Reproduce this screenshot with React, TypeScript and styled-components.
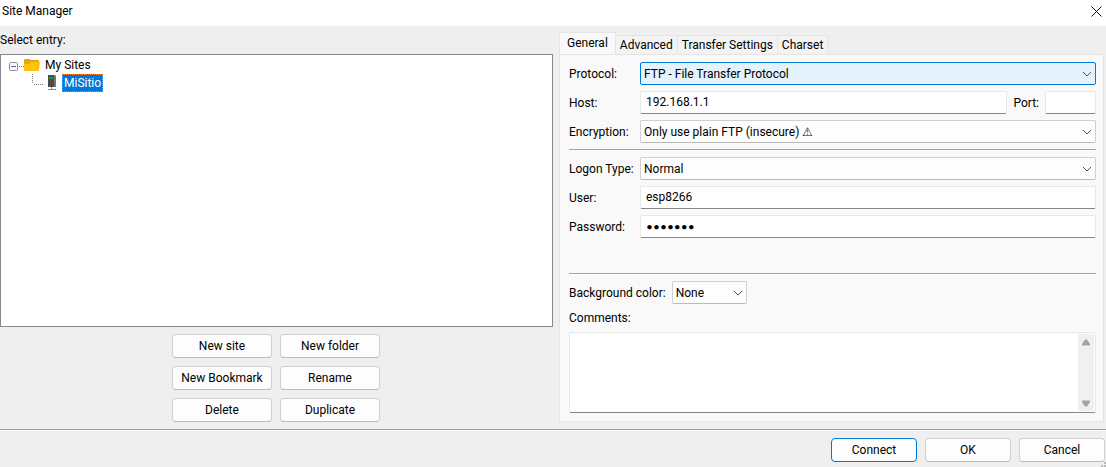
import React from 'react';
import styled, { createGlobalStyle, css } from 'styled-components';

const GlobalStyle = createGlobalStyle`
  *, *::before, *::after { box-sizing: border-box; }
  body {
    margin: 0;
    background: #efefef;
    color: #000;
    font: 12px/16px Roboto, "Open Sans", sans-serif;
  }
  button, input, select, textarea { font: inherit; color: inherit; margin: 0; }
`;

const Dialog = styled.div`
  display: flex;
  flex-direction: column;
  min-height: 100vh;
`;

const TitleBar = styled.header`
  display: flex;
  align-items: center;
  justify-content: space-between;
  height: 26px;
  padding: 0 4px 4px 2px;
  background: #fff;
`;

const Title = styled.h1`
  margin: 0;
  font-size: 12px;
  font-weight: 400;
`;

const CloseButton = styled.button`
  display: flex;
  padding: 0;
  border: 0;
  background: none;
`;

const Content = styled.main`
  display: grid;
  grid-template-columns: 553fr 545fr;
  gap: 6px;
  padding: 0 2px 7px 0;
  flex: 1;
`;

const Column = styled.section`
  display: flex;
  flex-direction: column;
  min-width: 0;
`;

const EntryLabel = styled.div`
  display: flex;
  align-items: center;
  height: 28px;
`;

const Tree = styled.ul`
  flex: 1;
  margin: 0;
  padding: 1px 0 0 8px;
  border: 1px solid #828790;
  background: #fff;
  list-style: none;
`;

const TreeRow = styled.li`
  display: flex;
  align-items: center;
  height: 18px;
`;

const TreeText = styled.span<{ $selected?: boolean }>`
  height: 18px;
  padding: 0 1px;
  border: 1px solid transparent;
  ${(p) =>
    p.$selected &&
    css`
      border: 1px dotted #ff8728;
      background: #0078d7;
      color: #fff;
    `}
`;

const EntryActions = styled.div`
  display: grid;
  grid-template-columns: 100px 100px;
  justify-content: center;
  gap: 8px;
  padding: 7px 1px 0 0;
`;

const PushButton = styled.button<{ $primary?: boolean }>`
  height: 24px;
  padding: 0 4px;
  border: 1px solid ${(p) => (p.$primary ? '#0078d4' : '#d0d0d0')};
  border-bottom-color: ${(p) => (p.$primary ? '#0078d4' : '#bababa')};
  border-radius: 4px;
  background: #fdfdfd;
`;

const TabList = styled.div`
  display: flex;
  align-items: flex-end;
  height: 28px;
`;

const Tab = styled.button<{ $active?: boolean }>`
  height: 19px;
  padding: 0 4px;
  border: 1px solid #e5e5e5;
  border-width: 1px 1px 0 0;
  background: #f3f3f3;
  ${(p) =>
    p.$active &&
    css`
      height: 23px;
      margin-bottom: -1px;
      padding: 0 7px 2px;
      border-left-width: 1px;
      background: #f9f9f9;
    `}
`;

const Panel = styled.div`
  display: flex;
  flex-direction: column;
  flex: 1;
  padding: 7px 7px 8px 9px;
  border: 1px solid #e5e5e5;
  background: #f9f9f9;
`;

const Fields = styled.div`
  display: grid;
  grid-template-columns: 71px 1fr;
  row-gap: 6px;
  align-items: center;
`;

const Label = styled.label`
  white-space: nowrap;
`;

const Line = styled.div`
  display: flex;
  align-items: center;
  gap: 6px;
`;

const TextInput = styled.input<{ $narrow?: boolean }>`
  flex: ${(p) => (p.$narrow ? 'none' : '1')};
  width: ${(p) => (p.$narrow ? '51px' : '100%')};
  min-width: 0;
  height: 23px;
  padding: 0 5px 1px;
  border: 1px solid #e8e8e8;
  border-bottom-color: #868686;
  border-radius: 2px;
  background: #fff;
  outline: 0;
  &[type='password'] { font-family: Lato, sans-serif; }
`;

const SelectBox = styled.div<{ $narrow?: boolean }>`
  display: grid;
  width: ${(p) => (p.$narrow ? '75px' : '100%')};
  align-items: center;
  & > * { grid-area: 1 / 1; }
  & > svg { justify-self: end; margin-right: 4px; pointer-events: none; }
`;

const Select = styled.select<{ $focused?: boolean }>`
  appearance: none;
  width: 100%;
  height: 23px;
  padding: 1px 20px 0 3px;
  border: 1px solid ${(p) => (p.$focused ? '#0078d4' : '#d0d0d0')};
  border-bottom-color: ${(p) => (p.$focused ? '#0078d4' : '#bababa')};
  border-radius: 2px;
  background: ${(p) => (p.$focused ? '#e5f1fb' : '#fdfdfd')};
  outline: 0;
`;

const Rule = styled.hr`
  width: 100%;
  height: 2px;
  margin: 6px 0;
  border: 0;
  border-top: 1px solid #a0a0a0;
  background: #fff;
`;

const SpacedRule = styled(Rule)`
  margin-top: 35px;
`;

const CommentsLabel = styled(Label)`
  margin: 6px 0;
`;

const CommentsBox = styled.div`
  display: flex;
  flex: 1;
  min-height: 81px;
  padding: 1px;
  border: 1px solid #e8e8e8;
  border-bottom-color: #868686;
  border-radius: 2px;
  background: #fff;
`;

const Comments = styled.textarea`
  flex: 1;
  min-width: 0;
  padding: 2px 4px;
  border: 0;
  background: transparent;
  outline: 0;
  resize: none;
`;

const ScrollTrack = styled.div`
  display: flex;
  flex-direction: column;
  align-items: center;
  justify-content: space-between;
  width: 16px;
  padding: 5px 0 4px;
  background: #f0f0f0;
`;

const Footer = styled.footer`
  display: flex;
  justify-content: flex-end;
  gap: 8px;
  padding: 8px 1px 5px;
  border-top: 1px solid #a0a0a0;
  box-shadow: inset 0 1px #fff;
`;

const FooterButton = styled(PushButton)`
  width: 86px;
`;

const Grip = styled.svg`
  position: absolute;
  right: 0;
  bottom: 0;
`;

const Chevron = () => (
  <svg width="10" height="6" viewBox="0 0 10 6" fill="none" stroke="#555" aria-hidden="true">
    <path d="M1 1l4 4 4-4" />
  </svg>
);

const FolderBranch = () => (
  <svg width="34" height="18" viewBox="0 0 34 18" aria-hidden="true">
    <rect x=".5" y="6.500" width="8" height="8" rx="1" fill="#f8f8f8" stroke="#919191" />
    <path d="M2 10.500h5" stroke="#4b63a7" />
    <path d="M10 10.500h5" stroke="#808080" strokeDasharray="1 1" />
    <path d="M15 4q0-1 1-1h5l1 1h7q1 0 1 1v10H15z" fill="#e5a50f" />
    <path d="M15 8h5l2-2h9l-1 8.500q0 .5-1 .5H16q-1 0-1-1z" fill="#ffc20e" />
  </svg>
);

const SiteBranch = () => (
  <svg width="53" height="18" viewBox="0 0 53 18" aria-hidden="true">
    <path d="M23.500 0v10M25 10.500h10" stroke="#808080" strokeDasharray="1 1" />
    <path d="M39 1h6l2 1v11h-8z" fill="#4b4b4b" />
    <path d="M45 1l2 1v11h-2z" fill="#777" />
    <path d="M40 4h4" stroke="#16a03a" strokeWidth="2" />
    <path d="M42.500 13v3M39 15.500h8" stroke="#7890a5" />
  </svg>
);

interface DropDownProps {
  id: string;
  value: string;
  focused?: boolean;
  narrow?: boolean;
}

const DropDown = ({ id, value, focused, narrow }: DropDownProps) => (
  <SelectBox $narrow={narrow}>
    <Select id={id} $focused={focused} defaultValue={value}>
      <option>{value}</option>
    </Select>
    <Chevron />
  </SelectBox>
);

const entryActions = ['New site', 'New folder', 'New Bookmark', 'Rename', 'Delete', 'Duplicate'];
const tabs = ['General', 'Advanced', 'Transfer Settings', 'Charset'];

export default function App() {
  return (
    <Dialog>
      <GlobalStyle />
      <TitleBar>
        <Title>Site Manager</Title>
        <CloseButton aria-label="Close">
          <svg width="11" height="11" viewBox="0 0 11 11" stroke="#111" aria-hidden="true">
            <path d="M.5 .5l10 10M10.500 .5l-10 10" />
          </svg>
        </CloseButton>
      </TitleBar>
      <Content>
        <Column>
          <EntryLabel id="entries">Select entry:</EntryLabel>
          <Tree role="tree" aria-labelledby="entries">
            <TreeRow role="treeitem" aria-expanded="true">
              <FolderBranch />
              <TreeText>My Sites</TreeText>
            </TreeRow>
            <TreeRow role="treeitem" aria-selected="true">
              <SiteBranch />
              <TreeText $selected>MiSitio</TreeText>
            </TreeRow>
          </Tree>
          <EntryActions>
            {entryActions.map((name) => (
              <PushButton key={name}>{name}</PushButton>
            ))}
          </EntryActions>
        </Column>
        <Column>
          <TabList role="tablist">
            {tabs.map((name, i) => (
              <Tab key={name} role="tab" aria-selected={i === 0} $active={i === 0}>
                {name}
              </Tab>
            ))}
          </TabList>
          <Panel role="tabpanel">
            <Fields>
              <Label htmlFor="protocol">Protocol:</Label>
              <DropDown id="protocol" value="FTP - File Transfer Protocol" focused />
              <Label htmlFor="host">Host:</Label>
              <Line>
                <TextInput id="host" defaultValue="192.168.1.1" />
                <Label htmlFor="port">Port:</Label>
                <TextInput id="port" $narrow />
              </Line>
              <Label htmlFor="encryption">Encryption:</Label>
              <DropDown id="encryption" value="Only use plain FTP (insecure) ⚠" />
            </Fields>
            <Rule />
            <Fields>
              <Label htmlFor="logon">Logon Type:</Label>
              <DropDown id="logon" value="Normal" />
              <Label htmlFor="user">User:</Label>
              <TextInput id="user" defaultValue="esp8266" />
              <Label htmlFor="password">Password:</Label>
              <TextInput id="password" type="password" defaultValue="esp8266" />
            </Fields>
            <SpacedRule />
            <Line>
              <Label htmlFor="color">Background color:</Label>
              <DropDown id="color" value="None" narrow />
            </Line>
            <CommentsLabel htmlFor="comments">Comments:</CommentsLabel>
            <CommentsBox>
              <Comments id="comments" />
              <ScrollTrack aria-hidden="true">
                <svg width="8" height="7" viewBox="0 0 8 7" fill="#a3a3a3">
                  <path d="M3 .5h2L8 5v1.500H0V5z" />
                </svg>
                <svg width="8" height="7" viewBox="0 0 8 7" fill="#a3a3a3">
                  <path d="M0 .5h8V2L5 6.500H3L0 2z" />
                </svg>
              </ScrollTrack>
            </CommentsBox>
          </Panel>
        </Column>
      </Content>
      <Footer>
        <FooterButton $primary>Connect</FooterButton>
        <FooterButton>OK</FooterButton>
        <FooterButton>Cancel</FooterButton>
      </Footer>
      <Grip width="5" height="5" viewBox="0 0 5 5" fill="#b8b8b8" aria-hidden="true">
        <path d="M0 3h2v2H0zM3 3h2v2H3zM3 0h2v2H3z" />
      </Grip>
    </Dialog>
  );
}
